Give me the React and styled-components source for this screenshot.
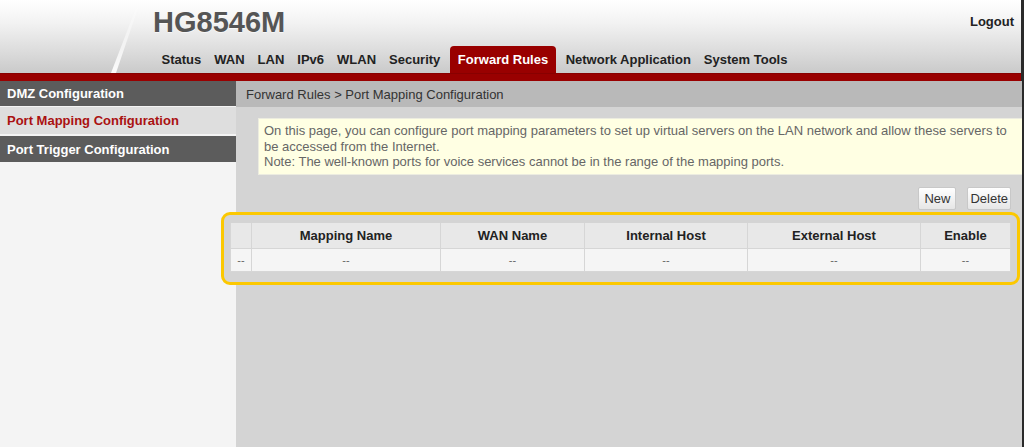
import styled, { createGlobalStyle } from 'styled-components';

const GlobalStyle = createGlobalStyle`
  html, body {
    margin: 0;
    padding: 0;
    background: #2a2a2a;
  }
  body {
    font-family: 'Liberation Sans', Arial, sans-serif;
  }
`;

const Page = styled.div`
  width: 1021px;
  min-height: 100vh;
  display: flex;
  flex-direction: column;
  background: #d4d4d4;
`;

const Header = styled.header`
  position: relative;
  height: 73px;
  padding-left: 153px;
  display: flex;
  flex-direction: column;
  background: linear-gradient(#ffffff 0%, #f3f3f3 30%, #dcdcdc 70%, #cacaca 100%);
`;

const Streak = styled.svg`
  position: absolute;
  left: 0;
  top: 0;
  pointer-events: none;
`;

const TopRow = styled.div`
  height: 46px;
  display: flex;
  justify-content: space-between;
  align-items: flex-start;
`;

const Title = styled.h1`
  margin: 8px 0 0;
  font-size: 29px;
  line-height: 29px;
  font-weight: bold;
  color: #555;
  text-shadow: 0 1px 0 rgba(255, 255, 255, 0.6);
`;

const Logout = styled.a`
  margin: 14px 7px 0 0;
  font-size: 13px;
  line-height: 15px;
  font-weight: bold;
  color: #222;
  cursor: pointer;
`;

const Nav = styled.nav`
  height: 27px;
  display: flex;
  align-items: stretch;
  margin-left: 2px;
`;

const NavItem = styled.a`
  display: flex;
  align-items: center;
  padding: ${({ $active }) => ($active ? '0 8px' : '0 6.5px')};
  margin: ${({ $active }) => ($active ? '0 3px' : '0')};
  font-size: 13px;
  font-weight: bold;
  color: ${({ $active }) => ($active ? '#fff' : '#222')};
  background: ${({ $active }) => ($active ? '#990000' : 'transparent')};
  border-radius: 4px 4px 0 0;
  cursor: pointer;
  white-space: nowrap;
`;

const RedBar = styled.div`
  height: 8px;
  background: #990000;
  border-top: 1px solid #880000;
  box-sizing: border-box;
`;

const Body = styled.div`
  flex: 1;
  display: flex;
`;

const Sidebar = styled.aside`
  width: 236px;
  flex-shrink: 0;
  background: #f4f4f4;
  display: flex;
  flex-direction: column;
  gap: 1px;
`;

const MenuItem = styled.a`
  display: flex;
  align-items: center;
  height: ${({ $h }) => $h}px;
  margin-bottom: ${({ $gap }) => $gap || 0}px;
  padding-left: 7px;
  font-size: 13px;
  font-weight: bold;
  color: ${({ $active }) => ($active ? '#aa1111' : '#fff')};
  background: ${({ $active }) => ($active ? '#dedede' : '#5c5c5c')};
  cursor: pointer;
`;

const Content = styled.main`
  flex: 1;
  display: flex;
  flex-direction: column;
  background: #d4d4d4;
`;

const Breadcrumb = styled.div`
  height: 26px;
  display: flex;
  align-items: center;
  padding-left: 10px;
  background: #b9b9b9;
  font-size: 13px;
  color: #333;
`;

const InfoBox = styled.div`
  margin: 11px 0 0 22px;
  padding: 4px 4px 4px 5px;
  background: #ffffe3;
  border: 1px solid #ecece0;
  border-right: none;
  font-size: 13px;
  line-height: 15.5px;
  color: #666;
`;

const ButtonRow = styled.div`
  margin-top: 12px;
  padding-right: 11px;
  display: flex;
  justify-content: flex-end;
  gap: 11px;
`;

const Button = styled.button`
  height: 23px;
  padding: 0 ${({ $pad }) => $pad}px;
  font-family: inherit;
  font-size: 13px;
  color: #333;
  background: linear-gradient(#ffffff, #e6e6e6);
  border: 1px solid #c8c8c8;
  border-radius: 2px;
  cursor: pointer;
`;

const TableArea = styled.div`
  position: relative;
  z-index: 0;
  margin: 13px 11px 0 -6px;

  &::before {
    content: '';
    position: absolute;
    z-index: -1;
    top: -11px;
    left: -9px;
    right: -9px;
    bottom: -13px;
    border: 3px solid #fcc800;
    border-radius: 9px;
    background: #d4d4d4;
  }
`;

const Table = styled.table`
  width: 780px;
  table-layout: fixed;
  border-collapse: collapse;
`;

const HeadCell = styled.th`
  height: 25px;
  padding: 0;
  background: #e8e8e8;
  border: 1px solid #d6d6d6;
  border-top: none;
  font-size: 13px;
  font-weight: bold;
  color: #222;
  text-align: center;
`;

const Cell = styled.td`
  height: 22px;
  padding: 0;
  background: #f5f5f5;
  border: 1px solid #d6d6d6;
  font-size: 11px;
  color: #666;
  text-align: center;
`;

const navItems = [
  'Status',
  'WAN',
  'LAN',
  'IPv6',
  'WLAN',
  'Security',
  'Forward Rules',
  'Network Application',
  'System Tools',
];

const columns = [
  { label: '', width: 21 },
  { label: 'Mapping Name', width: 189 },
  { label: 'WAN Name', width: 144 },
  { label: 'Internal Host', width: 163 },
  { label: 'External Host', width: 173 },
  { label: 'Enable', width: 90 },
];

export default function App() {
  return (
    <>
      <GlobalStyle />
      <Page>
        <Header>
          <Streak width="150" height="73" viewBox="0 0 150 73">
            <defs>
              <linearGradient id="streak" x1="0" y1="0" x2="0" y2="1">
                <stop offset="0" stopColor="#fff" stopOpacity="0.15" />
                <stop offset="1" stopColor="#fff" stopOpacity="0.95" />
              </linearGradient>
            </defs>
            <polygon points="136,8 138,8 116,73 111,73" fill="url(#streak)" />
          </Streak>
          <TopRow>
            <Title>HG8546M</Title>
            <Logout>Logout</Logout>
          </TopRow>
          <Nav>
            {navItems.map((item) => (
              <NavItem key={item} $active={item === 'Forward Rules'}>
                {item}
              </NavItem>
            ))}
          </Nav>
        </Header>
        <RedBar />
        <Body>
          <Sidebar>
            <MenuItem $h={25}>DMZ Configuration</MenuItem>
            <MenuItem $h={27} $gap={1} $active>
              Port Mapping Configuration
            </MenuItem>
            <MenuItem $h={26}>Port Trigger Configuration</MenuItem>
          </Sidebar>
          <Content>
            <Breadcrumb>Forward Rules &gt; Port Mapping Configuration</Breadcrumb>
            <InfoBox>
              On this page, you can configure port mapping parameters to set up virtual servers on the LAN
              network and allow these servers to be accessed from the Internet.
              <br />
              Note: The well-known ports for voice services cannot be in the range of the mapping ports.
            </InfoBox>
            <ButtonRow>
              <Button $pad={5}>New</Button>
              <Button $pad={2}>Delete</Button>
            </ButtonRow>
            <TableArea>
              <Table>
                <colgroup>
                  {columns.map((c, i) => (
                    <col key={i} style={{ width: c.width }} />
                  ))}
                </colgroup>
                <thead>
                  <tr>
                    {columns.map((c, i) => (
                      <HeadCell key={i}>{c.label}</HeadCell>
                    ))}
                  </tr>
                </thead>
                <tbody>
                  <tr>
                    {columns.map((c, i) => (
                      <Cell key={i}>--</Cell>
                    ))}
                  </tr>
                </tbody>
              </Table>
            </TableArea>
          </Content>
        </Body>
      </Page>
    </>
  );
}
